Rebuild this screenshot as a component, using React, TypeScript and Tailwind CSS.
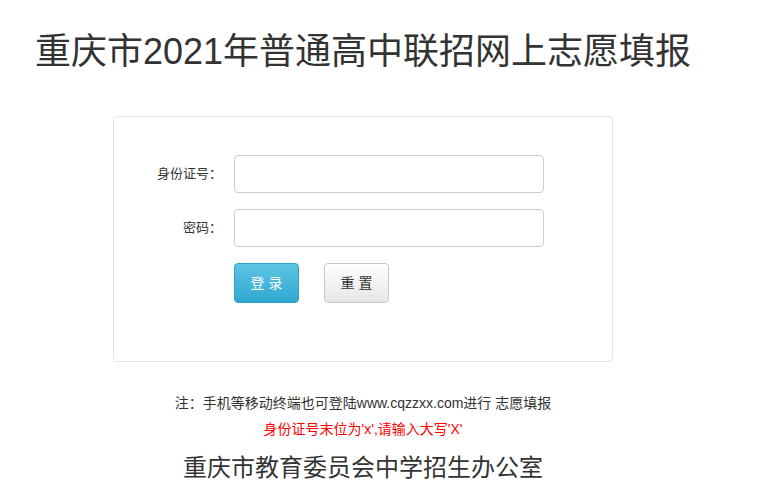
export default function App() {
  return (
    <div
      className="min-h-screen bg-white text-[#333]"
      style={{ fontFamily: '"Liberation Sans", "Noto Sans CJK SC", sans-serif' }}
    >
      {/* Header */}
      <h1 className="pl-[35px] pt-[32px] text-[36px] leading-[40px] font-normal text-[#333]">
        重庆市2021年普通高中联招网上志愿填报
      </h1>

      <div className="ml-[113px] mt-[44px] w-[500px]">
        {/* Login card */}
        <div className="rounded-[4px] border border-[#e3e3e3] bg-white pt-[38px] pb-[58px]">
          <div className="grid grid-cols-[108px_310px] gap-x-[12px] gap-y-[16px] items-center">
            <label className="text-right text-[13px] leading-[20px]">身份证号：</label>
            <input className="h-[38px] rounded-[4px] border border-[#ccc] bg-white px-2 text-[14px] outline-none" />

            <label className="text-right text-[13px] leading-[20px]">密码：</label>
            <input
              type="password"
              className="h-[38px] rounded-[4px] border border-[#ccc] bg-white px-2 text-[14px] outline-none"
            />

            <div />
            <div className="flex gap-[25px]">
              <button className="h-[40px] w-[65px] rounded-[4px] border border-[#2f9fc6] bg-gradient-to-b from-[#5bc4e3] to-[#2fa8d2] text-[14px] tracking-[4px] pl-[4px] text-white">
                登录
              </button>
              <button className="h-[40px] w-[65px] rounded-[4px] border border-[#c8c8c8] bg-gradient-to-b from-white to-[#e6e6e6] text-[14px] tracking-[4px] pl-[4px] text-[#333]">
                重置
              </button>
            </div>
          </div>
        </div>

        {/* Footer */}
        <div className="text-center">
          <p className="mt-[31px] text-[14px] leading-[20px] text-[#333]">
            注：手机等移动终端也可登陆www.cqzzxx.com进行 志愿填报
          </p>
          <p className="mt-[6px] text-[14px] leading-[20px] text-[#f00]">
            身份证号末位为'x',请输入大写'X'
          </p>
          <p className="mt-[13px] text-[24px] leading-[32px] text-[#333]">
            重庆市教育委员会中学招生办公室
          </p>
        </div>
      </div>
    </div>
  );
}
